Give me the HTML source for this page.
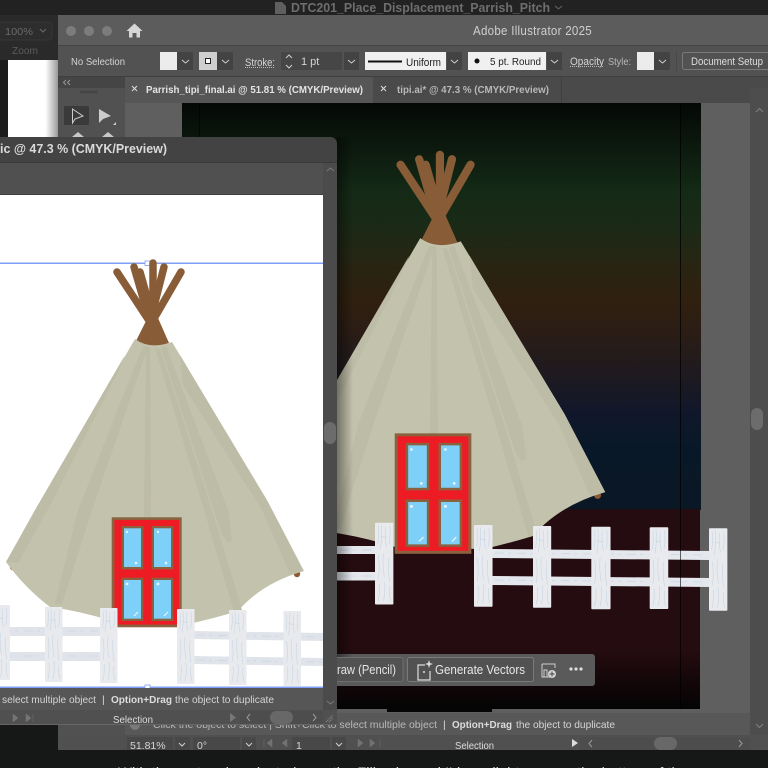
<!DOCTYPE html>
<html><head><meta charset="utf-8"><style>
html,body{margin:0;padding:0;background:#171717;width:768px;height:768px;overflow:hidden}
svg{display:block;filter:blur(.35px)}
text{font-family:"Liberation Sans",sans-serif;font-size:11px;fill:#d4d4d4}
.c{fill:none;stroke:#cfcfcf;stroke-width:1}
</style></head><body>
<svg width="768" height="768" viewBox="0 0 768 768" xmlns="http://www.w3.org/2000/svg">
<defs>
<linearGradient id="art" x1="0" y1="103" x2="0" y2="510" gradientUnits="userSpaceOnUse">
<stop offset="0" stop-color="#040806"/><stop offset=".08" stop-color="#0a150c"/><stop offset=".22" stop-color="#142a16"/><stop offset=".3" stop-color="#1a2a16"/><stop offset=".38" stop-color="#262614"/><stop offset=".48" stop-color="#30200f"/><stop offset=".56" stop-color="#2b1d15"/><stop offset=".66" stop-color="#1f1a1f"/><stop offset=".76" stop-color="#11172a"/><stop offset=".84" stop-color="#091828"/><stop offset="1" stop-color="#0a1725"/>
</linearGradient>
<linearGradient id="gnd" x1="0" y1="509" x2="0" y2="710" gradientUnits="userSpaceOnUse">
<stop offset="0" stop-color="#250c10"/><stop offset=".7" stop-color="#250c10"/><stop offset=".85" stop-color="#140709"/><stop offset="1" stop-color="#040404"/>
</linearGradient>
<linearGradient id="sh" x1="0" x2="1" y1="0" y2="0"><stop offset="0" stop-color="#000" stop-opacity=".4"/><stop offset="1" stop-color="#000" stop-opacity="0"/></linearGradient>
<linearGradient id="sh2" x1="0" x2="1" y1="0" y2="0"><stop offset="0" stop-color="#fff"/><stop offset=".75" stop-color="#fff"/><stop offset="1" stop-color="#999"/></linearGradient>
<g id="tipi">
<circle cx="13" cy="567" r="3.2" fill="#8b5a33"/><circle cx="297" cy="574" r="3.2" fill="#8b5a33"/>
<g fill="none" stroke="#885c37" stroke-width="7.500" stroke-linecap="round">
<path d="M117 272L150 322"/><path d="M134 267L150 322"/><path d="M140 272L155 325"/><path d="M153 263L153 325"/><path d="M164 267L150 322"/><path d="M181 272L152 322"/>
</g>
<path d="M136 341L148 317L158 318L169 343L155 347L146 346Z" fill="#885c37"/>
<path d="M135 339Q150 350 172 342L267 500L304 571Q262 583 238 611Q215 618 193 623L112 621Q80 611 50 607Q25 588 6 562Z" fill="#c3c2ad"/>
<g fill="#bdbca6">
<path d="M146 346L150 347L151 510L150 620L144 620L144 510Z"/>
<path d="M143 346L148 347L92 510L62 604L55 604L78 510Z"/>
<path d="M155 348L160 349L212 510L242 610L234 612L204 510Z"/>
<path d="M161 348L166 346L228 510L232 540L228 543L222 535Z"/>
<path d="M125 355L35 510L6 562L18 563L53 500L118 372Z"/>
<path d="M180 355L272 510L303 571L290 574L262 510L183 385Z"/>
</g>
<rect x="111.7" y="517.3" width="70" height="110" fill="#8a6240"/>
<rect x="114.4" y="520" width="64.6" height="104.6" fill="#ed1c24"/>
<g fill="#8a6240"><rect x="121.7" y="526" width="21.6" height="43.3"/><rect x="151.7" y="526" width="21.6" height="43.3"/><rect x="121.7" y="577.7" width="21.6" height="43.3"/><rect x="151.7" y="577.7" width="21.6" height="43.3"/></g>
<g fill="#7fd0f8"><rect x="124" y="528.3" width="17" height="38.7"/><rect x="154" y="528.3" width="17" height="38.7"/><rect x="124" y="580" width="17" height="38.7"/><rect x="154" y="580" width="17" height="38.7"/></g>
<g fill="#e6f6ff"><circle cx="127" cy="532" r="1.2"/><circle cx="158" cy="532" r="1.2"/><circle cx="136" cy="563" r="1.3"/><circle cx="166" cy="563" r="1.3"/><circle cx="127" cy="584" r="1.4"/><circle cx="158" cy="584" r="1.4"/><path d="M134 616L138 612M164 616L168 612" stroke="#e6f6ff" stroke-width="1.2"/></g>
</g>
<g id="post">
<rect x="0" y="0" width="17.5" height="75" rx=".8" fill="#e9eaed"/>
<path d="M3 3Q4 12 2.500 20M6 2Q7 14 5 24M10 4Q9 14 11 22M14 3Q15 12 13.500 20M3 30Q5 42 3 52M8 28Q7 40 9 50M13 32Q12 42 14 54M4 56Q5 64 3 72M9 54Q10 64 8 72M14 58Q13 66 15 72M5 12Q8 14 11 13" fill="none" stroke="#c6d6e6" stroke-width=".6"/>
</g>
</defs>

<!-- desktop -->
<rect width="768" height="768" fill="#161717"/>
<rect width="768" height="15" fill="#222"/>
<rect y="15" width="58" height="45" fill="#2a2a2a"/>
<rect y="60" width="8" height="80" fill="#1c1c1c"/>
<rect x="8" y="60" width="50" height="80" fill="url(#sh2)"/>
<rect x="-4" y="22" width="56" height="18" rx="3" fill="#2d2d2d" stroke="#363636"/>
<text x="5" y="35" style="font-size:10.5px;fill:#6a6a6a" textLength="28" lengthAdjust="spacingAndGlyphs">100%</text>
<path d="M40 29l3 3 3-3" fill="none" stroke="#6a6a6a"/>
<text x="12" y="54" style="font-size:10.5px;fill:#5c5c5c" textLength="26" lengthAdjust="spacingAndGlyphs">Zoom</text>
<path d="M275 2h7l4 4v8h-11z" fill="#5f5f5f"/>
<text x="291" y="12" style="font-size:13px;font-weight:bold;fill:#6e6e6e" textLength="259" lengthAdjust="spacingAndGlyphs">DTC201_Place_Displacement_Parrish_Pitch</text>
<path d="M555 6l3.500 3 3.500-3" fill="none" stroke="#666"/>

<!-- main window -->
<path d="M64 15H768V750H58V21Q58 15 64 15Z" fill="#5a5a5a"/>
<rect x="58" y="15" width="710" height="30" fill="#5c5c5c"/>
<rect x="58" y="45" width="710" height="1" fill="#454545"/>
<rect x="58" y="46" width="710" height="30" fill="#525252"/>
<rect x="58" y="76" width="710" height="1" fill="#3f3f3f"/>
<rect x="58" y="77" width="710" height="26" fill="#4a4a4a"/>
<circle cx="71" cy="31" r="5" fill="#7c7c7c"/><circle cx="89" cy="31" r="5" fill="#7c7c7c"/><circle cx="107" cy="31" r="5" fill="#7c7c7c"/>
<path d="M134.500 23.500L142.500 31H140V37.500H136.500V33H132.500V37.500H129V31H126.500Z" fill="#d6d6d6"/>
<text x="473" y="35" style="font-size:12.5px;fill:#cfcfcf;letter-spacing:.3px" textLength="119" lengthAdjust="spacingAndGlyphs">Adobe Illustrator 2025</text>

<!-- control bar -->
<text x="71" y="65" style="font-size:10.5px" textLength="54" lengthAdjust="spacingAndGlyphs">No Selection</text>
<rect x="160" y="52" width="17" height="18" fill="#ececec"/><rect x="177" y="52" width="16" height="18" fill="#434343"/>
<path d="M182 60l3.500 3 3.500-3" class="c"/>
<rect x="199" y="52" width="18" height="18" fill="#cfcfcf"/><rect x="205.500" y="58.500" width="5" height="5" fill="#fff" stroke="#222" stroke-width="1"/>
<rect x="217" y="52" width="16" height="18" fill="#434343"/><path d="M222 60l3.500 3 3.500-3" class="c"/>
<text x="245" y="66" style="font-size:11px" textLength="30" lengthAdjust="spacingAndGlyphs">Stroke:</text><path d="M245 67.500H275" stroke="#bbb" stroke-dasharray="1 1"/>
<rect x="281" y="52" width="16" height="18" fill="#464646"/><path d="M286 58l3-3 3 3M286 65l3 3 3-3" class="c"/>
<rect x="297" y="52" width="45" height="18" fill="#464646"/><text x="301" y="65" style="font-size:11px">1 pt</text>
<rect x="344" y="52" width="15" height="18" fill="#434343"/><path d="M348 60l3.500 3 3.500-3" class="c"/>
<rect x="365" y="52" width="81" height="18" fill="#f0f0f0"/><rect x="368" y="60.500" width="34" height="2" fill="#111"/>
<text x="406" y="66" style="font-size:11px;fill:#222" textLength="35" lengthAdjust="spacingAndGlyphs">Uniform</text>
<rect x="447" y="52" width="15" height="18" fill="#434343"/><path d="M451 60l3.500 3 3.500-3" class="c"/>
<rect x="468" y="52" width="78" height="18" fill="#f0f0f0"/><circle cx="477" cy="61" r="2.500" fill="#111"/>
<text x="490" y="65" style="font-size:10.5px;fill:#222" textLength="51" lengthAdjust="spacingAndGlyphs">5 pt. Round</text>
<rect x="547" y="52" width="15" height="18" fill="#434343"/><path d="M551 60l3.500 3 3.500-3" class="c"/>
<text x="570" y="65" style="font-size:11px" textLength="34" lengthAdjust="spacingAndGlyphs">Opacity</text><path d="M570 66.500H604" stroke="#bbb" stroke-dasharray="1 1"/>
<text x="608" y="65" style="font-size:10.5px;fill:#b8b8b8" textLength="23" lengthAdjust="spacingAndGlyphs">Style:</text>
<rect x="637" y="52" width="17" height="18" fill="#ececec"/><rect x="654" y="52" width="16" height="18" fill="#434343"/><path d="M659 60l3.500 3 3.500-3" class="c"/>
<rect x="676" y="52" width="1" height="19" fill="#484848"/>
<rect x="682.500" y="52.500" width="90" height="17" rx="2" fill="#525252" stroke="#7a7a7a"/>
<text x="691" y="65" style="font-size:11px;fill:#dedede" textLength="72" lengthAdjust="spacingAndGlyphs">Document Setup</text>

<!-- tabs -->
<rect x="125" y="77" width="248" height="26" fill="#565656"/>
<path d="M132 86l5 5m0-5l-5 5M381 86l5 5m0-5l-5 5" stroke="#ddd" fill="none"/>
<text x="146" y="93" style="font-size:10.5px;font-weight:bold;fill:#e4e4e4" textLength="217" lengthAdjust="spacingAndGlyphs">Parrish_tipi_final.ai @ 51.81 % (CMYK/Preview)</text>
<rect x="561" y="77" width="1" height="26" fill="#3f3f3f"/>
<text x="397" y="93" style="font-size:10.5px;font-weight:bold;fill:#b8b8b8" textLength="152" lengthAdjust="spacingAndGlyphs">tipi.ai* @ 47.3 % (CMYK/Preview)</text>

<!-- tool panel -->
<rect x="58" y="77" width="67" height="11" fill="#454545"/>
<rect x="58" y="88" width="67" height="662" fill="#515151"/>
<path d="M66 80l-2.500 2.500 2.500 2.500M70 80l-2.500 2.500 2.500 2.500" fill="none" stroke="#999"/>
<path d="M81 90.500v3M83 90.500v3M85 90.500v3M87 90.500v3M89 90.500v3M91 90.500v3M93 90.500v3M95 90.500v3M97 90.500v3" stroke="#3c3c3c"/>
<rect x="64" y="106" width="25" height="19" rx="1.500" fill="#3a3a3a"/>
<path d="M72.500 109V123L75 119L83 116Z" fill="none" stroke="#ccc"/>
<path d="M99 109V123L103 119L111 116Z" fill="#cdcdcd"/><path d="M113 125l3-3v3z" fill="#ccc"/>
<path d="M72 137l6-5 6 5zM102 137l6-5 6 5z" fill="#c8c8c8"/>

<!-- canvas -->
<rect x="125" y="103" width="625" height="610" fill="#5f5f5f"/>
<rect x="750" y="88" width="18" height="650" fill="#4d4d4d"/>
<rect x="182" y="103" width="519" height="407" fill="url(#art)"/>
<rect x="182" y="509" width="518" height="200" fill="url(#gnd)"/>
<rect x="387" y="709" width="105" height="3" fill="#050505"/>
<rect x="199" y="103" width="1" height="606" fill="#000" opacity=".6"/>
<rect x="680" y="103" width="1" height="606" fill="#000" opacity=".75"/>
<path d="M756 112l3.500-3.500 3.500 3.500M756 724l3.500 3.500 3.500-3.500" fill="none" stroke="#808080"/>
<rect x="751" y="408" width="12" height="22" rx="6" fill="#6c6c6c"/>

<!-- right art -->
<g transform="translate(272.400 -133.100) scale(1.095)"><use href="#tipi"/></g>
<g fill="#e4e7ec">
<rect x="337" y="546" width="38" height="8"/><rect x="337" y="572" width="38" height="8.500"/>
<path d="M492 549L709 551V560L492 558Z"/><path d="M492 576L709 578V587L492 585Z"/>
</g>
<path d="M340 550H373M340 576H373M495 553L705 555M495 580L705 582" stroke="#c8d6e4" stroke-width=".7" stroke-dasharray="9 4 3 6"/>
<g transform="translate(375 522.700) scale(1.050 1.090)"><use href="#post"/></g>
<g transform="translate(474 525) scale(1.060 1.090)"><use href="#post"/></g>
<g transform="translate(533 526) scale(1.040 1.090)"><use href="#post"/></g>
<g transform="translate(591.300 526.700) scale(1.100 1.100)"><use href="#post"/></g>
<g transform="translate(649.700 527.300) scale(1.060 1.090)"><use href="#post"/></g>
<g transform="translate(709 528.300) scale(1.050 1.100)"><use href="#post"/></g>
<rect x="680" y="550" width="1" height="38" fill="#000" opacity=".6"/>

<!-- floating bar -->
<rect x="330" y="654" width="265" height="32" rx="3" fill="#5a5a5a"/>
<rect x="330" y="657.500" width="73" height="24" rx="2" fill="#525252" stroke="#6e6e6e"/>
<text x="337" y="674" style="font-size:12.5px;fill:#e4e4e4" textLength="59" lengthAdjust="spacingAndGlyphs">raw (Pencil)</text>
<rect x="407.500" y="657.500" width="126" height="24" rx="2" fill="#525252" stroke="#7a7a7a"/>
<path d="M425 665H418V680H430V671" fill="none" stroke="#ddd" stroke-width="1.200"/><path d="M429 660l1 3 3 1-3 1-1 3-1-3-3-1 3-1z" fill="#ddd"/><circle cx="424" cy="672" r="1" fill="#ddd"/>
<text x="435" y="674" style="font-size:12.5px;fill:#e8e8e8" textLength="90" lengthAdjust="spacingAndGlyphs">Generate Vectors</text>
<path d="M542 664h13v4M542 664v13h8M544 670h3v7h-3z" fill="none" stroke="#cfcfcf"/><circle cx="552" cy="674" r="4" fill="#d4d4d4"/><path d="M552 671.500v5M549.500 674h5" stroke="#444"/>
<circle cx="571" cy="669" r="1.600" fill="#ddd"/><circle cx="576" cy="669" r="1.600" fill="#ddd"/><circle cx="581" cy="669" r="1.600" fill="#ddd"/>

<!-- window shadow -->
<rect x="337" y="137" width="16" height="520" fill="url(#sh)"/>

<!-- main status -->
<rect x="125" y="713" width="625" height="25" fill="#585858"/>
<rect x="58" y="735" width="710" height="15" fill="#505050"/>
<circle cx="135" cy="725" r="5" fill="#7a7a7a"/>
<text x="153" y="728" style="font-size:10.5px;fill:#b8b8b8" textLength="284" lengthAdjust="spacingAndGlyphs">Click the object to select  |  Shift+Click to select multiple object</text>
<text x="443" y="728" style="font-size:10.5px;fill:#d8d8d8">|</text>
<text x="452" y="728" style="font-size:10.5px;font-weight:bold;fill:#dcdcdc" textLength="60" lengthAdjust="spacingAndGlyphs">Option+Drag</text>
<text x="516" y="728" style="font-size:10.5px;fill:#d4d4d4" textLength="99" lengthAdjust="spacingAndGlyphs">the object to duplicate</text>
<rect x="127" y="737" width="46" height="13" fill="#484848"/><rect x="175" y="737" width="15" height="13" fill="#484848"/>
<rect x="193" y="737" width="47" height="13" fill="#484848"/><rect x="242" y="737" width="14" height="13" fill="#484848"/>
<rect x="292" y="737" width="38" height="13" fill="#484848"/><rect x="332" y="737" width="14" height="13" fill="#484848"/>
<text x="130" y="749" style="font-size:10.5px;fill:#d4d4d4">51.81%</text>
<text x="197" y="749" style="font-size:10.5px;fill:#d4d4d4">0°</text>
<text x="296" y="749" style="font-size:10.5px;fill:#d4d4d4">1</text>
<path d="M179 743l3 3 3-3M246 743l3 3 3-3M336 743l3 3 3-3" class="c"/>
<path d="M264 739v8M272 739l-5 4 5 4zM287 739l-5 4 5 4z" fill="#727272" stroke="#727272" stroke-width=".5"/>
<path d="M358 739l5 4-5 4zM370 739l5 4-5 4zM380 739v8" fill="#727272" stroke="#727272" stroke-width=".5"/>
<text x="455" y="749" style="font-size:10.5px;fill:#dcdcdc" textLength="39" lengthAdjust="spacingAndGlyphs">Selection</text>
<path d="M572 739l6 4-6 4z" fill="#ddd"/>
<rect x="580" y="737" width="170" height="13" fill="#4d4d4d"/>
<path d="M592 740l-3 3.500 3 3.500M739 740l3 3.500-3 3.500" fill="none" stroke="#999"/>
<rect x="654" y="737" width="23" height="13" rx="6.500" fill="#686868"/>

<!-- floating window -->
<path d="M0 137H329Q337 137 337 145V725H0Z" fill="#505050"/>
<path d="M0 137H329Q337 137 337 145V163H0Z" fill="#434343"/>
<rect y="162" width="337" height="1" fill="#393939"/>
<text x="0" y="153" style="font-size:12.5px;font-weight:bold;fill:#dadada" textLength="167" lengthAdjust="spacingAndGlyphs">ic @ 47.3 % (CMYK/Preview)</text>
<rect y="163" width="323" height="32" fill="#505050"/>
<rect x="0" y="194" width="323" height="1" fill="#3e3e3e"/>
<rect x="323" y="163" width="14" height="562" fill="#4b4b4b"/>
<path d="M327 171l3.500-3 3.500 3M327 701l3.500 3 3.500-3" fill="none" stroke="#7a7a7a"/>
<rect x="324" y="422" width="12" height="22" rx="6" fill="#6c6c6c"/>
<rect x="0" y="195" width="323" height="492" fill="#fff"/>
<rect x="0" y="262.500" width="323" height="1.500" fill="#7f9ff6"/>
<rect x="145" y="261" width="5" height="4.500" fill="#fff" stroke="#7f9cf2" stroke-width=".8"/>

<!-- left art -->
<use href="#tipi"/>
<g fill="#e0e4ea">
<rect x="0" y="627" width="100" height="9"/><rect x="0" y="652" width="100" height="9"/>
<path d="M194 631L323 633V641L194 639Z"/><path d="M194 656L323 658V666L194 664Z"/>
</g>
<path d="M2 631H98M2 656H98M196 635L321 637M196 660L321 662" stroke="#c8d6e4" stroke-width=".8" stroke-dasharray="9 4 3 6"/>
<g transform="translate(-7.500 605)"><use href="#post"/></g>
<use href="#post" x="45" y="607"/>
<use href="#post" x="100" y="608"/>
<use href="#post" x="177" y="609"/>
<use href="#post" x="229" y="610"/>
<use href="#post" x="283.500" y="611"/>
<rect x="0" y="686.500" width="323" height="1.500" fill="#7f9ff6"/>
<rect x="145" y="685" width="5" height="4" fill="#fff" stroke="#7f9cf2" stroke-width=".8"/>

<!-- floating status -->
<rect x="0" y="688" width="323" height="22" fill="#565656"/>
<rect x="0" y="710" width="337" height="15" fill="#505050"/>
<rect x="0" y="724" width="337" height="1" fill="#666"/>
<text x="2" y="703" style="font-size:10.5px;fill:#d4d4d4" textLength="94" lengthAdjust="spacingAndGlyphs">select multiple object</text>
<text x="102" y="703" style="font-size:10.5px;fill:#d8d8d8">|</text>
<text x="111" y="703" style="font-size:10.5px;font-weight:bold;fill:#dcdcdc" textLength="61" lengthAdjust="spacingAndGlyphs">Option+Drag</text>
<text x="175" y="703" style="font-size:10.5px;fill:#d4d4d4" textLength="99" lengthAdjust="spacingAndGlyphs">the object to duplicate</text>
<path d="M13 714l5 4-5 4zM26 714l5 4-5 4zM33 714v8" fill="#757575" stroke="#757575" stroke-width=".5"/>
<text x="113" y="723" style="font-size:10.5px;fill:#dcdcdc" textLength="40" lengthAdjust="spacingAndGlyphs">Selection</text>
<path d="M230 713l6 4.500-6 4.500z" fill="#777"/>
<rect x="240" y="711" width="83" height="13" fill="#4d4d4d"/>
<path d="M250 714l-3 3.500 3 3.500M313 714l3 3.500-3 3.500" fill="none" stroke="#999"/>
<rect x="270" y="711" width="23" height="13" rx="6.500" fill="#686868"/>
<path d="M326 722l7-7M329 722l4-4" stroke="#999" stroke-dasharray="1 1"/>

<!-- bottom text -->
<text x="118" y="777" style="font-size:14px;fill:#d8d8d8" textLength="570" lengthAdjust="spacingAndGlyphs">With the rectangle selected, use the Fill color and I'd use light gray on the bottom of the</text>
</svg>
</body></html>
